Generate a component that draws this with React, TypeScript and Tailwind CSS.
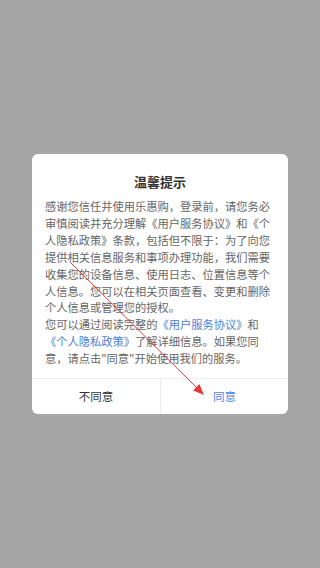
const font = { fontFamily: '"Noto Sans CJK SC", "Noto Sans", sans-serif' };

export default function App() {
  return (
    <main
      className="relative flex h-[568px] w-[320px] items-center justify-center bg-[#a6a6a6]"
      style={font}
    >
      {/* DIALOG */}
      <div className="w-[256px] overflow-hidden rounded-[6px] bg-white">
        <h2 className="pt-[18px] text-center text-[13px] font-bold leading-[20px] text-[#333]">
          温馨提示
        </h2>

        <div className="mt-[6px] px-[13px] pb-[11px] text-[11.25px] leading-[16.9px] text-[#666]">
          <p>
            感谢您信任并使用乐惠购，登录前，请您务必审慎阅读并充分理解《用户服务协议》和《个人隐私政策》条款，包括但不限于：为了向您提供相关信息服务和事项办理功能，我们需要收集您的设备信息、使用日志、位置信息等个人信息。您可以在相关页面查看、变更和删除个人信息或管理您的授权。
          </p>
          <p>
            您可以通过阅读完整的
            <span className="text-[#4a80dc]">《用户服务协议》</span>和
            <span className="text-[#4a80dc]">《个人隐私政策》</span>
            了解详细信息。如果您同意，请点击"同意"开始使用我们的服务。
          </p>
        </div>

        {/* BUTTONS */}
        <div className="grid h-[36px] grid-cols-2 border-t border-[#eeeeee] text-[11.5px]">
          <button className="flex items-center justify-center text-[#333]">不同意</button>
          <button className="flex items-center justify-center border-l border-[#eeeeee] text-[#4a86e8]">
            同意
          </button>
        </div>
      </div>

      {/* annotation arrow */}
      <svg
        className="pointer-events-none absolute left-0 top-0"
        width="320"
        height="568"
        viewBox="0 0 320 568"
      >
        <line x1="71" y1="263" x2="197" y2="388" stroke="#e23b3b" strokeWidth="1" />
        <polygon points="204,395 193,390.4 199.4,384" fill="#e23b3b" />
      </svg>
    </main>
  );
}
